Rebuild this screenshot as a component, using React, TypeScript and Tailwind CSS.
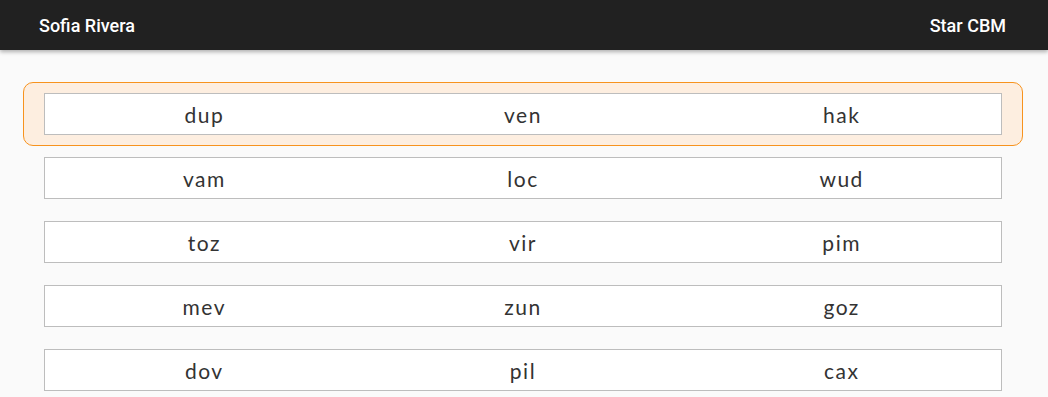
import React from 'react';

const rows: string[][] = [
  ['dup', 'ven', 'hak'],
  ['vam', 'loc', 'wud'],
  ['toz', 'vir', 'pim'],
  ['mev', 'zun', 'goz'],
  ['dov', 'pil', 'cax'],
];

const App: React.FC = () => {
  const selected = 0;

  return (
    <div className="min-h-screen bg-[#fafafa]">
      <header className="relative z-10 flex h-[50px] items-center justify-between bg-[#212121] px-[39px] font-['Roboto',sans-serif] text-[18px] font-medium text-white shadow-[0_2px_4px_rgba(0,0,0,0.3)]">
        <span>Sofia Rivera</span>
        <span className="mr-[3px]">Star CBM</span>
      </header>

      <main className="ml-[23px] mt-[32px] w-[1000px]">
        {rows.map((row, i) => (
          <div
            key={i}
            className={`rounded-[10px] border px-[20px] py-[10px] ${
              i === selected ? 'border-[#f7931e] bg-[#fdeee0]' : 'border-transparent'
            }`}
          >
            <div className="grid h-[42px] grid-cols-3 items-center border border-[#bdbdbd] bg-white font-['Lato',sans-serif] text-[21px] tracking-[1.5px] text-[#333333]">
              {row.map((w) => (
                <span key={w} className="pt-[1px] text-center">
                  {w}
                </span>
              ))}
            </div>
          </div>
        ))}
      </main>
    </div>
  );
};

export default App;
